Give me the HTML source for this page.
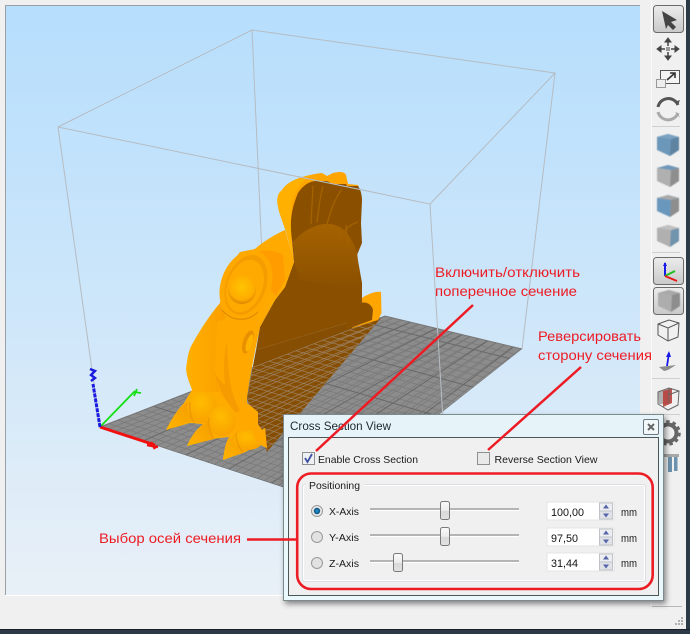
<!DOCTYPE html>
<html><head><meta charset="utf-8"><style>
html,body{margin:0;padding:0;background:#f0f0f0;width:690px;height:634px;overflow:hidden}
svg{display:block;position:absolute;left:0;top:0}
text{font-family:"Liberation Sans",sans-serif}
</style></head><body>
<svg width="690" height="634" viewBox="0 0 690 634" xmlns="http://www.w3.org/2000/svg">
<defs>
<linearGradient id="sky" x1="0" y1="0" x2="0" y2="1"><stop offset="0" stop-color="#b6defd"/><stop offset=".5" stop-color="#cde6fa"/><stop offset="1" stop-color="#e9f0f7"/></linearGradient>
<linearGradient id="btn" x1="0" y1="0" x2="0" y2="1"><stop offset="0" stop-color="#ececec"/><stop offset="1" stop-color="#c9c9c9"/></linearGradient>
<linearGradient id="arch" x1="0" y1="0" x2="0" y2="1"><stop offset="0" stop-color="#a56200"/><stop offset="1" stop-color="#8a5000"/></linearGradient>
<linearGradient id="body" x1="0" y1="0" x2="1" y2="0"><stop offset="0" stop-color="#ffb000"/><stop offset=".5" stop-color="#ffab00"/><stop offset="1" stop-color="#fba000"/></linearGradient>
<linearGradient id="wing" x1="0" y1="0" x2="1" y2="0"><stop offset="0" stop-color="#ffb000"/><stop offset="1" stop-color="#fb9e00"/></linearGradient>
<radialGradient id="bulb" cx=".45" cy=".35" r=".7"><stop offset="0" stop-color="#ffbc00"/><stop offset="1" stop-color="#f9a000"/></radialGradient>
<linearGradient id="claw" x1="0" y1="1" x2="1" y2="0"><stop offset="0" stop-color="#ffb400"/><stop offset="1" stop-color="#f49c00"/></linearGradient>
<radialGradient id="ball" cx=".5" cy=".4" r=".6"><stop offset="0" stop-color="#ffc400"/><stop offset=".75" stop-color="#ffac00"/><stop offset="1" stop-color="#d98400"/></radialGradient>
<linearGradient id="thumb" x1="0" y1="0" x2="0" y2="1"><stop offset="0" stop-color="#fafafa"/><stop offset=".5" stop-color="#ececec"/><stop offset=".55" stop-color="#d8d8d8"/><stop offset="1" stop-color="#e2e2e2"/></linearGradient>
<radialGradient id="radioOn" cx=".5" cy=".5" r=".5"><stop offset="0" stop-color="#2a9ad8"/><stop offset="1" stop-color="#0a4c78"/></radialGradient>
<filter id="sh" x="-10%" y="-10%" width="120%" height="120%"><feDropShadow dx="2" dy="3" stdDeviation="3" flood-color="#000" flood-opacity=".45"/></filter>
<filter id="bl"><feGaussianBlur stdDeviation=".6"/></filter>
<clipPath id="floorClip"><polygon points="100,427 385,316 522,349 328,502"/></clipPath>
<clipPath id="hatchClip"><polygon points="247,398 256,350 283,342 330,328 370,316 381,318 267,452"/></clipPath>
<path id="g1" fill="none" d="M100,427L385,316M114.3,431.7L393.6,318.1M128.5,436.4L402.1,320.1M142.8,441.1L410.7,322.2M157,445.8L419.3,324.3M171.3,450.4L427.8,326.3M185.5,455.1L436.4,328.4M199.8,459.8L444.9,330.4M214,464.5L453.5,332.5M228.3,469.2L462.1,334.6M242.5,473.9L470.6,336.6M256.8,478.6L479.2,338.7M271,483.3L487.8,340.8M285.3,487.9L496.3,342.8M299.5,492.6L504.9,344.9M313.8,497.3L513.4,346.9M328,502L522,349"/>
<path id="g2" fill="none" d="M100,427L328,502M117.8,420.1L340.1,492.4M135.6,413.1L352.3,482.9M153.4,406.2L364.4,473.3M171.3,399.3L376.5,463.8M189.1,392.3L388.6,454.2M206.9,385.4L400.8,444.6M224.7,378.4L412.9,435.1M242.5,371.5L425,425.5M260.3,364.6L437.1,415.9M278.1,357.6L449.3,406.4M295.9,350.7L461.4,396.8M313.8,343.8L473.5,387.3M331.6,336.8L485.6,377.7M349.4,329.9L497.8,368.1M367.2,322.9L509.9,358.6M385,316L522,349"/>
</defs>

<!-- window chrome -->
<rect width="690" height="634" fill="#f0f0f0"/>
<rect x="5.5" y="5.5" width="640" height="590" fill="url(#sky)"/>
<path d="M5.5,595V5.5H640" fill="none" stroke="#9aa0a6" stroke-width="1"/>
<rect x="5" y="595" width="636" height="1" fill="#fff"/>
<rect x="640" y="0" width="46" height="629" fill="#f0f0f0"/>
<rect x="651" y="0" width="1" height="605" fill="#fafafa"/>
<rect x="652" y="606" width="30" height="1" fill="#b8b8b8"/>
<rect x="686" y="0" width="4" height="634" fill="#2c3a48"/>
<rect x="0" y="629" width="690" height="5" fill="#2c3a48"/>
<rect x="0" y="629" width="690" height="1" fill="#1a2028"/>

<!-- bounding box rear -->
<g fill="none" stroke="#b6bcc2" stroke-width="1">
<path d="M252,30L264,300"/>
<path d="M58,127L100,427"/>
<path d="M555,73L522,349"/>
<path d="M58,127L252,30L555,73L430,204"/>
</g>

<!-- floor -->
<polygon points="100,427 385,316 522,349 328,502" fill="#8c8c8c"/>
<g clip-path="url(#floorClip)">
<g stroke="#7a7a7a" stroke-width=".8">
<use href="#g1"/><use href="#g1" transform="translate(7.1,2.3)"/>
<use href="#g2"/><use href="#g2" transform="translate(8.9,-3.5)"/>
</g>
<path fill="none" stroke="#696969" stroke-width="1" d="M100,427L385,316M142.8,441.1L410.7,322.200M185.5,455.1L436.4,328.400M228.3,469.2L462.1,334.600M271,483.300L487.8,340.800M313.800,497.300L513.400,346.900M100,427L328,502M153.400,406.200L364.400,473.300M206.900,385.400L400.800,444.600M260.300,364.600L437.100,415.900M313.800,343.800L473.500,387.300M367.200,322.900L509.900,358.600"/>
</g>
<path d="M100,427L385,316L522,349" fill="none" stroke="#777" stroke-width="1"/>

<!-- hatch -->
<g clip-path="url(#hatchClip)">
<rect x="240" y="310" width="150" height="150" fill="#864e02"/>
<g stroke="#9c8468" stroke-width=".8" stroke-opacity=".85">
<use href="#g1"/><use href="#g1" transform="translate(7.1,2.3)"/>
<use href="#g2"/><use href="#g2" transform="translate(8.9,-3.5)"/>
</g>
</g>

<!-- tail fin -->
<path d="M362,298C368,294 376,291 381,292L381.500,313L378,320L352,328Z" fill="#ffa500"/>
<path d="M360,303C367,301 372,305 373,310L372,320L345,330L350,312Z" fill="#8a5000"/>

<!-- crest orange peaks -->
<path d="M282,190C288,180 305,175 322,173L327,176L333,173C340,171 345,172 346,175L348,184L358,185L362,200L355,222L300,250Z" fill="#ffa500"/>
<path d="M278,207C276,198 278,193 282,190C288,182 300,177 312,175C300,182 292,195 291,213L292,240L294,262L286,232C282,220 279,213 278,207Z" fill="#ffb000"/>

<!-- section solid -->
<path d="M292,240C290,225 290,212 298,193C303,185 310,181 316,181L327,181L333,184L346,184L347,186L358,186C361,190 362,196 362,200L361,223L362,243L357,255L362,283L362,313L370,316L330,328L283,342L256,350L260,327L275,300L285,287L294,262Z" fill="#8a5000"/>
<path d="M293,242C305,228 322,221 335,225C345,228 352,238 357,252L361,290L300,280L294,262Z" fill="url(#arch)"/>
<g fill="none" stroke="#a46200" stroke-width="1.3">
<path d="M323,186C320,196 319,208 317,222"/>
<path d="M342,189C335,198 331,210 327,224"/>
<path d="M358,222C350,224 342,232 339,238"/>
<path d="M346,225L348,246"/>
<path d="M313,186L311,224"/>
</g>

<!-- body -->
<path d="M294,262L285,287L275,300L260,327C256,345 250,375 247,397L247,403L258,412L257,423L262,430L265,428L267,448C262,446 258,443 257,443C252,448 248,451 243,453L223,460C224,450 226,442 229,437C220,438 212,439 207,440L187,446C191,436 197,429 203,424C198,424 194,423 190,423L166,430C171,420 177,410 184,403L193,388C187,378 185,370 187,363C188,352 191,346 193,343C200,330 210,315 220,303L226,270L240,252L255,249C263,242 274,235 285,230Z" fill="url(#body)"/>
<!-- wing -->
<path d="M193,343C200,330 210,315 220,303L226,318L217,325L215,373L220,392L193,392C187,378 185,370 187,363C188,352 191,346 193,343Z" fill="url(#wing)"/>
<!-- front panel -->
<path d="M217,322L215,373L220,397L235,400L235,420L245,433L258,425L258,412L247,403L247,397C250,375 256,345 260,327L270,305Z" fill="#ffa800"/>
<path d="M215,373C217,385 222,397 236,413L240,410C232,398 228,378 227,343C224,352 223,368 225,385C221,382 218,378 215,373Z" fill="#f69c00"/>
<ellipse cx="248" cy="342" rx="5" ry="12" transform="rotate(18 248 342)" fill="#e89000"/>
<ellipse cx="249.500" cy="343" rx="3" ry="9" transform="rotate(18 249.500 343)" fill="#ffb200"/>
<!-- toes -->
<path d="M166,430C172,419 178,409 187,402L194,420Z" fill="url(#claw)"/>
<path d="M187,446C192,436 199,427 209,421L214,439Z" fill="url(#claw)"/>
<path d="M223,460C224,449 228,439 236,434L244,452Z" fill="url(#claw)"/>
<ellipse cx="202" cy="407" rx="15" ry="16" fill="url(#bulb)"/>
<ellipse cx="222" cy="421" rx="14" ry="15" fill="url(#bulb)"/>
<ellipse cx="248" cy="440" rx="15" ry="10" fill="url(#bulb)"/>
<path d="M190,402C189,410 191,418 194,423M209,418C208,426 210,434 214,439M236,433C236,441 239,448 243,452" stroke="#ee9600" stroke-width="1.200" fill="none"/>
<path d="M258,412L257,423L262,430L265,428L267,448L257,443L252,430Z" fill="#ffa800"/>
<!-- eye / head -->
<path d="M255,249C263,242 274,235 285,230L294,262L285,287L275,300L262,320L252,316Z" fill="#ffaa00"/>
<path d="M260,251C268,250 276,251 283,255L285,280L276,296L270,290Z" fill="#ff9c00"/>
<ellipse cx="246" cy="285" rx="25" ry="36" transform="rotate(20 246 285)" fill="#ffa800"/>
<ellipse cx="246" cy="285" rx="20" ry="31" transform="rotate(20 246 285)" fill="#f59c00"/>
<ellipse cx="245" cy="286" rx="17.500" ry="27" transform="rotate(20 245 286)" fill="#ffaa00"/>
<circle cx="242" cy="290" r="14" fill="url(#ball)"/>
<path d="M222,310C232,322 248,322 258,312" stroke="#e08a00" fill="none" stroke-width="1.200"/>

<!-- front bbox lines over model -->
<g fill="none" stroke="#b6bcc2" stroke-width="1">
<path d="M58,127L430,204L443,420"/>
</g>

<!-- axes -->
<path d="M100,427L135,391" stroke="#14e014" stroke-width="1.8"/>
<path d="M134,396L137,389M134,392L141,393" stroke="#14e014" stroke-width="1.8"/>
<path d="M100,427L155,445" stroke="#f01010" stroke-width="3"/>
<path d="M147,445L158,447M151,442L155,449" stroke="#f01010" stroke-width="2.5"/>
<path d="M100,427L93,384" stroke="#1a1ae0" stroke-width="3" stroke-dasharray="4 1"/>
<path d="M90,369L95,371L91,375L95,378L91,381" stroke="#1a1ae0" stroke-width="2.4" fill="none"/>

<!-- toolbar -->
<rect x="653.500" y="5.500" width="30" height="27" rx="3" fill="url(#btn)" stroke="#6b6b6b"/>
<polygon points="662,11 677,20 671,22 676,27 673,30 668,25 666,29" fill="#444"/>
<g fill="#444" stroke="#444" stroke-width="1">
<path d="M668,38L665,42H671ZM668,60L665,56H671ZM657,49L661,46V52ZM679,49L675,46V52Z"/>
<path d="M668,42V46M668,52V56M661,49H665M671,49H675" fill="none" stroke-width="1.500"/>
</g>
<rect x="666" y="47" width="4" height="4" fill="#999"/>
<rect x="660.500" y="70.500" width="19" height="13" fill="#f4f4f4" stroke="#555"/>
<path d="M667,80L675,73M670,73H675V78" stroke="#333" stroke-width="1.600" fill="none"/>
<rect x="656.500" y="79.500" width="9" height="8" fill="#eee" stroke="#999"/>
<path d="M658,107A10.500,10.500 0 0 1 678,105" fill="none" stroke="#555" stroke-width="3"/>
<path d="M678,105L680,100L674,102Z" fill="#555"/>
<path d="M658,112A10.500,10.500 0 0 0 678,113" fill="none" stroke="#aaa" stroke-width="3"/>
<path d="M678,113L680,118L675,112Z" fill="#aaa"/>
<rect x="652" y="126" width="28" height="1" fill="#cfcfcf"/>
<!-- cubes -->
<g transform="translate(668,145)" filter="url(#bl)"><polygon points="-11,-8 0,-11 11,-8 11,5 2,11 -11,5" fill="#6d97b8"/><polygon points="3,-6 11,-8 11,5 2,11" fill="#5f84a2"/><polygon points="-11,-8 0,-11 11,-8 3,-6" fill="#7ba2c1"/></g>
<g transform="translate(668,176)" filter="url(#bl)"><polygon points="-11,-8 0,-11 11,-8 11,5 2,11 -11,5" fill="#b0b0b0"/><polygon points="3,-6 11,-8 11,5 2,11" fill="#8e8e8e"/><polygon points="-11,-8 0,-11 11,-8 3,-6" fill="#6f98ba"/></g>
<g transform="translate(668,206)" filter="url(#bl)"><polygon points="-11,-8 0,-11 11,-8 11,5 2,11 -11,5" fill="#6a98bd"/><polygon points="3,-6 11,-8 11,5 2,11" fill="#8e8e8e"/><polygon points="-11,-8 0,-11 11,-8 3,-6" fill="#a8a8a8"/></g>
<g transform="translate(668,236)" filter="url(#bl)"><polygon points="-11,-8 0,-11 11,-8 11,5 2,11 -11,5" fill="#b0b0b0"/><polygon points="3,-6 11,-8 11,5 2,11" fill="#6f93ae"/><polygon points="-11,-8 0,-11 11,-8 3,-6" fill="#c0c0c0"/></g>
<rect x="652" y="252" width="28" height="1" fill="#cfcfcf"/>
<rect x="653.500" y="257.500" width="30" height="27" rx="3" fill="url(#btn)" stroke="#6b6b6b"/>
<path d="M665,276V263" stroke="#1a1ae8" stroke-width="2"/><path d="M665,262L663,266H667Z" fill="#1a1ae8"/>
<path d="M665,276L675,271" stroke="#20c020" stroke-width="2"/>
<path d="M665,276L677,281" stroke="#e81818" stroke-width="2"/>
<rect x="653.500" y="287.500" width="30" height="27" rx="3" fill="url(#btn)" stroke="#6b6b6b"/>
<g transform="translate(669,301)" filter="url(#bl)"><polygon points="-11,-8 0,-11 11,-8 11,5 2,11 -11,5" fill="#adadad"/><polygon points="3,-6 11,-8 11,5 2,11" fill="#8d8d8d"/><polygon points="-11,-8 0,-11 11,-8 3,-6" fill="#a8a8a8"/></g>
<g fill="none" stroke="#555" stroke-width="1">
<path d="M658,324L669,320L679,323L678,337L668,341L658,335Z"/>
<path d="M658,324L668,328L679,323M668,328V341"/>
</g>
<polygon points="659,367 676,365 668,370 664,371" fill="#8d8d8d"/>
<path d="M667,366L669,353" stroke="#1a1ae8" stroke-width="1.800"/><path d="M669,351L666,357H671Z" fill="#1a1ae8"/>
<rect x="652" y="378" width="28" height="1" fill="#cfcfcf"/>
<polygon points="658,392 669,389 669,404 659,404" fill="#b0b0b0"/>
<polygon points="663,391 672,388 672,403 663,407" fill="#b8403a" opacity=".9"/>
<g fill="none" stroke="#666" stroke-width="1"><path d="M658,392L669,388L679,391L678,405L668,410L658,404Z"/><path d="M669,388V403M668,395L679,391"/></g>
<rect x="652" y="414" width="28" height="1" fill="#cfcfcf"/>
<circle cx="668" cy="433" r="8.500" fill="none" stroke="#666" stroke-width="4"/>
<circle cx="668" cy="433" r="11.500" fill="none" stroke="#666" stroke-width="2.500" stroke-dasharray="3.500 3"/>
<rect x="664" y="454" width="15" height="3" fill="#a8a8a8"/>
<rect x="668" y="457" width="4" height="15" fill="#6c92ad"/><rect x="674" y="457" width="3.500" height="14" fill="#6c92ad"/>
<g fill="#b0b0b0"><rect x="678" y="623" width="2" height="2"/><rect x="681" y="623" width="2" height="2"/><rect x="681" y="620" width="2" height="2"/><rect x="675" y="623" width="2" height="2"/><rect x="678" y="620" width="2" height="2"/><rect x="681" y="617" width="2" height="2"/></g>

<!-- dialog -->
<rect x="283.500" y="414.500" width="380" height="186" fill="#eaf7fb" stroke="#7c8a8c" filter="url(#sh)"/>
<rect x="284" y="415" width="379" height="22" fill="#e6f4f9"/>
<rect x="288.500" y="437.500" width="370" height="158" fill="#f0f0f0" stroke="#4c5858"/>
<text x="290" y="430" font-size="12" fill="#1e2a30" textLength="101" lengthAdjust="spacingAndGlyphs">Cross Section View</text>
<rect x="643.500" y="419.500" width="15" height="15" rx="1.500" fill="#f2f8fa" stroke="#6a7a80"/>
<path d="M648,424L654,430M654,424L648,430" stroke="#666" stroke-width="2"/>

<!-- checkboxes -->
<rect x="302.500" y="452.500" width="12" height="12" fill="#eef0f4" stroke="#8e8f8f"/>
<path d="M305,458L307.500,462L312,454" stroke="#3c4fa0" stroke-width="1.800" fill="none"/>
<text x="318" y="463" font-size="10.500" fill="#1a1a1a" textLength="100" lengthAdjust="spacingAndGlyphs">Enable Cross Section</text>
<rect x="477.500" y="452.500" width="12" height="12" fill="#e9e9e9" stroke="#8e8f8f"/>
<text x="494.500" y="463" font-size="10.500" fill="#1a1a1a" textLength="103" lengthAdjust="spacingAndGlyphs">Reverse Section View</text>

<!-- groupbox -->
<rect x="302.500" y="484.500" width="343" height="97" rx="2" fill="none" stroke="#dcdfe3"/>
<rect x="303.500" y="485.500" width="341" height="95" rx="2" fill="none" stroke="#fff"/>
<rect x="306" y="482" width="58" height="6" fill="#f0f0f0"/>
<text x="309" y="489" font-size="10.500" fill="#1a1a1a" textLength="51" lengthAdjust="spacingAndGlyphs">Positioning</text>

<!-- rows -->
<g>
<circle cx="317" cy="511" r="5.500" fill="#e8e8e8" stroke="#9a9a9a"/><circle cx="317" cy="511" r="3.200" fill="url(#radioOn)"/>
<text x="329" y="515" font-size="10.500" fill="#1a1a1a" textLength="30" lengthAdjust="spacingAndGlyphs">X-Axis</text>
<rect x="370" y="508" width="149" height="2" fill="#b4b4b4"/><rect x="370" y="510" width="149" height="1" fill="#fff"/>
<rect x="440.500" y="501.500" width="9" height="18" rx="2" fill="url(#thumb)" stroke="#7a7a7a"/>
<rect x="547" y="502" width="67" height="18" fill="#fff" stroke="#e4e4e4"/>
<text x="551" y="516" font-size="11" fill="#111" textLength="33" lengthAdjust="spacingAndGlyphs">100,00</text>
<rect x="599.500" y="503" width="13" height="8" fill="#eceef2" stroke="#c0c4c8"/><rect x="599.500" y="511" width="13" height="8" fill="#e0e2e8" stroke="#c0c4c8"/>
<path d="M606,504.500L603,508.500H609ZM606,517.500L603,513.500H609Z" fill="#5565a8"/>
<text x="621" y="516" font-size="11" fill="#1a1a1a" textLength="16" lengthAdjust="spacingAndGlyphs">mm</text>
</g>
<g>
<circle cx="317" cy="537" r="5.500" fill="#e2e2e2" stroke="#9a9a9a"/>
<text x="329" y="541" font-size="10.500" fill="#1a1a1a" textLength="30" lengthAdjust="spacingAndGlyphs">Y-Axis</text>
<rect x="370" y="534" width="149" height="2" fill="#b4b4b4"/><rect x="370" y="536" width="149" height="1" fill="#fff"/>
<rect x="440.500" y="527.500" width="9" height="18" rx="2" fill="url(#thumb)" stroke="#7a7a7a"/>
<rect x="547" y="528" width="67" height="18" fill="#fff" stroke="#e4e4e4"/>
<text x="551" y="542" font-size="11" fill="#111" textLength="27" lengthAdjust="spacingAndGlyphs">97,50</text>
<rect x="599.500" y="529" width="13" height="8" fill="#eceef2" stroke="#c0c4c8"/><rect x="599.500" y="537" width="13" height="8" fill="#e0e2e8" stroke="#c0c4c8"/>
<path d="M606,530.500L603,534.500H609ZM606,543.500L603,539.500H609Z" fill="#5565a8"/>
<text x="621" y="542" font-size="11" fill="#1a1a1a" textLength="16" lengthAdjust="spacingAndGlyphs">mm</text>
</g>
<g>
<circle cx="317" cy="563" r="5.500" fill="#e2e2e2" stroke="#9a9a9a"/>
<text x="329" y="567" font-size="10.500" fill="#1a1a1a" textLength="30" lengthAdjust="spacingAndGlyphs">Z-Axis</text>
<rect x="370" y="560" width="149" height="2" fill="#b4b4b4"/><rect x="370" y="562" width="149" height="1" fill="#fff"/>
<rect x="393.500" y="553.500" width="9" height="18" rx="2" fill="url(#thumb)" stroke="#7a7a7a"/>
<rect x="547" y="553" width="67" height="18" fill="#fff" stroke="#e4e4e4"/>
<text x="551" y="567" font-size="11" fill="#111" textLength="27" lengthAdjust="spacingAndGlyphs">31,44</text>
<rect x="599.500" y="554" width="13" height="8" fill="#eceef2" stroke="#c0c4c8"/><rect x="599.500" y="562" width="13" height="8" fill="#e0e2e8" stroke="#c0c4c8"/>
<path d="M606,555.500L603,559.500H609ZM606,568.500L603,564.500H609Z" fill="#5565a8"/>
<text x="621" y="567" font-size="11" fill="#1a1a1a" textLength="16" lengthAdjust="spacingAndGlyphs">mm</text>
</g>

<!-- annotations -->
<rect x="297.200" y="473.500" width="355.500" height="115.500" rx="14" fill="none" stroke="#ed1c24" stroke-width="2.600"/>
<path d="M473,305L316,451" stroke="#ed1c24" stroke-width="2.500"/>
<path d="M581,367L488,450" stroke="#ed1c24" stroke-width="2.500"/>
<path d="M247,539.500H297" stroke="#ed1c24" stroke-width="2.600"/>
<g fill="#ed1c24" font-size="14">
<text x="435" y="277" textLength="145" lengthAdjust="spacingAndGlyphs">Включить/отключить</text>
<text x="435" y="296" textLength="142" lengthAdjust="spacingAndGlyphs">поперечное сечение</text>
<text x="538" y="341" textLength="103" lengthAdjust="spacingAndGlyphs">Реверсировать</text>
<text x="538" y="360" textLength="114" lengthAdjust="spacingAndGlyphs">сторону сечения</text>
<text x="99" y="543" textLength="142" lengthAdjust="spacingAndGlyphs">Выбор осей сечения</text>
</g>
</svg>
</body></html>
